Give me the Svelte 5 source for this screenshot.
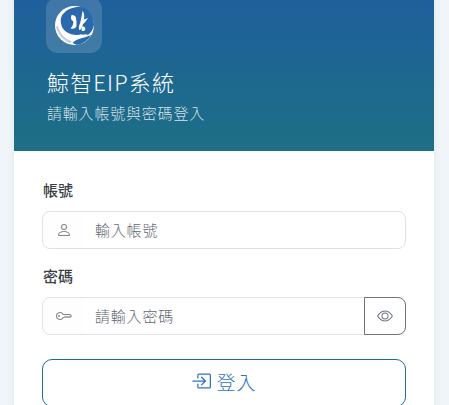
<script>
  let account = $state('');
  let password = $state('');
</script>

<div class="page">
  <main class="card">
    <header class="hero">
      <div class="logo">
        <svg viewBox="10 10 116 116" width="39" height="39" aria-hidden="true">
          <circle cx="68" cy="68" r="58" fill="#fff"/>
          <path d="M28 44C38 20 70 10 90 13 112 18 126 42 126 66 124 78 118 90 108 96 100 90 96 98 88 94 70 100 38 92 30 70 27 60 26 52 28 44Z" fill="#2a69ad"/>
          <path d="M62 120C74 106 96 106 118 96 110 110 92 124 74 125Z" fill="#2a69ad"/>
          <path d="M60 36C55 44 57 51 64 55 66 63 62 70 56 76 66 80 73 76 74 69 74 58 74 46 70 40ZM92 24C90 36 88 48 85 60 81 70 79 77 83 82 89 78 91 72 93 64 99 60 106 50 108 45 103 48 99 50 96 50 98 40 97 30 92 24Z" fill="#fff"/>
          <path d="M90 72C95 69 101 73 100 79 98 85 92 86 89 83Z" fill="#fff"/>
          <path d="M16 70C18 88 34 110 58 118" fill="none" stroke="#c3cfe0" stroke-width="6"/>
        </svg>
      </div>
      <h1>鯨智EIP系統</h1>
      <p>請輸入帳號與密碼登入</p>
    </header>

    <form class="form">
      <label for="acc">帳號</label>
      <div class="field">
        <span class="prefix">
          <svg viewBox="0 0 16 16" width="16" height="16" aria-hidden="true"><path d="M8 8a3 3 0 1 0 0-6 3 3 0 0 0 0 6Zm2-3a2 2 0 1 1-4 0 2 2 0 0 1 4 0Zm4 8c0 1-1 1-1 1H3s-1 0-1-1 1-4 6-4 6 3 6 4Zm-1-.004c-.001-.246-.154-.986-.832-1.664C11.516 10.68 10.289 10 8 10c-2.29 0-3.516.68-4.168 1.332-.678.678-.83 1.418-.832 1.664h10Z" fill="currentColor"/></svg>
        </span>
        <input id="acc" placeholder="輸入帳號" bind:value={account} />
      </div>

      <label for="pwd">密碼</label>
      <div class="field">
        <span class="prefix">
          <svg viewBox="0 0 16 16" width="16" height="16" aria-hidden="true"><path d="M0 8a4 4 0 0 1 7.465-2H14a.5.5 0 0 1 .354.146l1.5 1.5a.5.5 0 0 1 0 .708l-1.5 1.5a.5.5 0 0 1-.708 0L13 9.207l-.646.647a.5.5 0 0 1-.708 0L11 9.207l-.646.647a.5.5 0 0 1-.708 0L9 9.207l-.646.647A.5.5 0 0 1 8 10h-.535A4 4 0 0 1 0 8Zm4-3a3 3 0 1 0 2.712 4.285A.5.5 0 0 1 7.163 9h.63l.853-.854a.5.5 0 0 1 .708 0l.646.647.646-.647a.5.5 0 0 1 .708 0l.646.647.646-.647a.5.5 0 0 1 .708 0l.646.647.793-.793-1-1h-6.63a.5.5 0 0 1-.451-.285A3 3 0 0 0 4 5Z" fill="currentColor"/><path d="M4 8a1 1 0 1 1-2 0 1 1 0 0 1 2 0Z" fill="currentColor"/></svg>
        </span>
        <input id="pwd" type="password" placeholder="請輸入密碼" bind:value={password} />
        <button type="button" class="eye" aria-label="顯示密碼">
          <svg viewBox="0 0 16 16" width="16" height="16" aria-hidden="true"><path d="M16 8s-3-5.5-8-5.5S0 8 0 8s3 5.5 8 5.5S16 8 16 8ZM1.173 8a13.133 13.133 0 0 1 1.66-2.043C4.12 4.668 5.88 3.5 8 3.5c2.12 0 3.879 1.168 5.168 2.457A13.133 13.133 0 0 1 14.828 8c-.058.087-.122.183-.195.288-.335.48-.83 1.12-1.465 1.755C11.879 11.332 10.119 12.5 8 12.5c-2.12 0-3.879-1.168-5.168-2.457A13.134 13.134 0 0 1 1.172 8Z" fill="currentColor"/><path d="M8 5.5a2.5 2.5 0 1 0 0 5 2.5 2.5 0 0 0 0-5ZM4.5 8a3.5 3.5 0 1 1 7 0 3.5 3.5 0 0 1-7 0Z" fill="currentColor"/></svg>
        </button>
      </div>

      <button type="button" class="submit">
        <svg viewBox="0 0 16 16" width="20" height="20" aria-hidden="true"><path fill-rule="evenodd" d="M6 3.5a.5.5 0 0 1 .5-.5h8a.5.5 0 0 1 .5.5v9a.5.5 0 0 1-.5.5h-8a.5.5 0 0 1-.5-.5v-2a.5.5 0 0 0-1 0v2A1.5 1.5 0 0 0 6.5 14h8a1.5 1.5 0 0 0 1.5-1.5v-9A1.5 1.5 0 0 0 14.5 2h-8A1.5 1.5 0 0 0 5 3.5v2a.5.5 0 0 0 1 0v-2Z" fill="currentColor"/><path fill-rule="evenodd" d="M11.854 8.354a.5.5 0 0 0 0-.708l-3-3a.5.5 0 1 0-.708.708L10.293 7.500H1.500a.5.5 0 0 0 0 1h8.793l-2.147 2.146a.5.5 0 0 0 .708.708l3-3Z" fill="currentColor"/></svg>
        <span>登入</span>
      </button>
    </form>
  </main>
</div>

<style>
  :global(body) {
    margin: 0;
    background: #eff5f8;
    font-family: "Noto Sans CJK TC", "Noto Sans", sans-serif;
  }
  .page {
    height: 405px;
    overflow: hidden;
    padding: 0 15px 0 14px;
  }
  .card {
    margin-top: -3px;
    height: 420px;
    background: #fff;
    box-shadow: 0 0 8px rgba(40, 70, 90, 0.06);
  }
  .hero {
    height: 154px;
    box-sizing: border-box;
    padding: 0 32px 0 33px;
    background: linear-gradient(180deg, #1f5f9c 0%, #1d6f85 100%);
    color: #fff;
  }
  .logo {
    width: 56px;
    height: 56px;
    margin-left: -1px;
    border-radius: 12px;
    background: rgba(255, 255, 255, 0.15);
    display: flex;
    align-items: center;
    justify-content: center;
  }
  h1 {
    margin: 12px 0 0;
    font-size: 22px;
    letter-spacing: 1.15px;
    line-height: 32px;
    font-weight: 300;
  }
  p {
    margin: 4px 0 0;
    font-size: 15px;
    letter-spacing: 0.8px;
    line-height: 24px;
    font-weight: 300;
    color: rgba(255, 255, 255, 0.82);
  }
  .form {
    padding: 27px 28px 0;
    display: flex;
    flex-direction: column;
  }
  label {
    font-size: 15px;
    font-weight: 500;
    line-height: 24px;
    color: #3a4046;
    margin-left: 1px;
    margin-bottom: 9px;
  }
  .field {
    display: flex;
    height: 38px;
    box-sizing: border-box;
    margin-bottom: 15px;
    border: 1px solid #dee2e6;
    border-radius: 8px;
    background: #fff;
  }
  .prefix {
    width: 41px;
    display: flex;
    align-items: center;
    justify-content: center;
    color: #7c848b;
    background: #fefefe;
    border-radius: 8px 0 0 8px;
  }
  input {
    flex: 1;
    min-width: 0;
    border: 0;
    outline: 0;
    background: transparent;
    padding: 0 11px;
    font: 300 15px/36px "Noto Sans CJK TC", sans-serif;
    letter-spacing: 0.8px;
  }
  input::placeholder {
    color: #5f6870;
    opacity: 1;
  }
  .eye {
    width: 42px;
    margin: -1px -1px -1px 0;
    padding: 0;
    display: flex;
    align-items: center;
    justify-content: center;
    border: 1px solid #6c757d;
    border-radius: 0 8px 8px 0;
    background: #fff;
    color: #6c757d;
  }
  .submit {
    margin-top: 9px;
    height: 48px;
    padding: 0 0 4px;
    display: flex;
    align-items: center;
    justify-content: center;
    gap: 5px;
    border: 1px solid #1d6f96;
    border-radius: 10px;
    background: #fff;
    color: #2f72bd;
    font: 300 19px "Noto Sans CJK TC", sans-serif;
    letter-spacing: 1px;
  }
</style>
